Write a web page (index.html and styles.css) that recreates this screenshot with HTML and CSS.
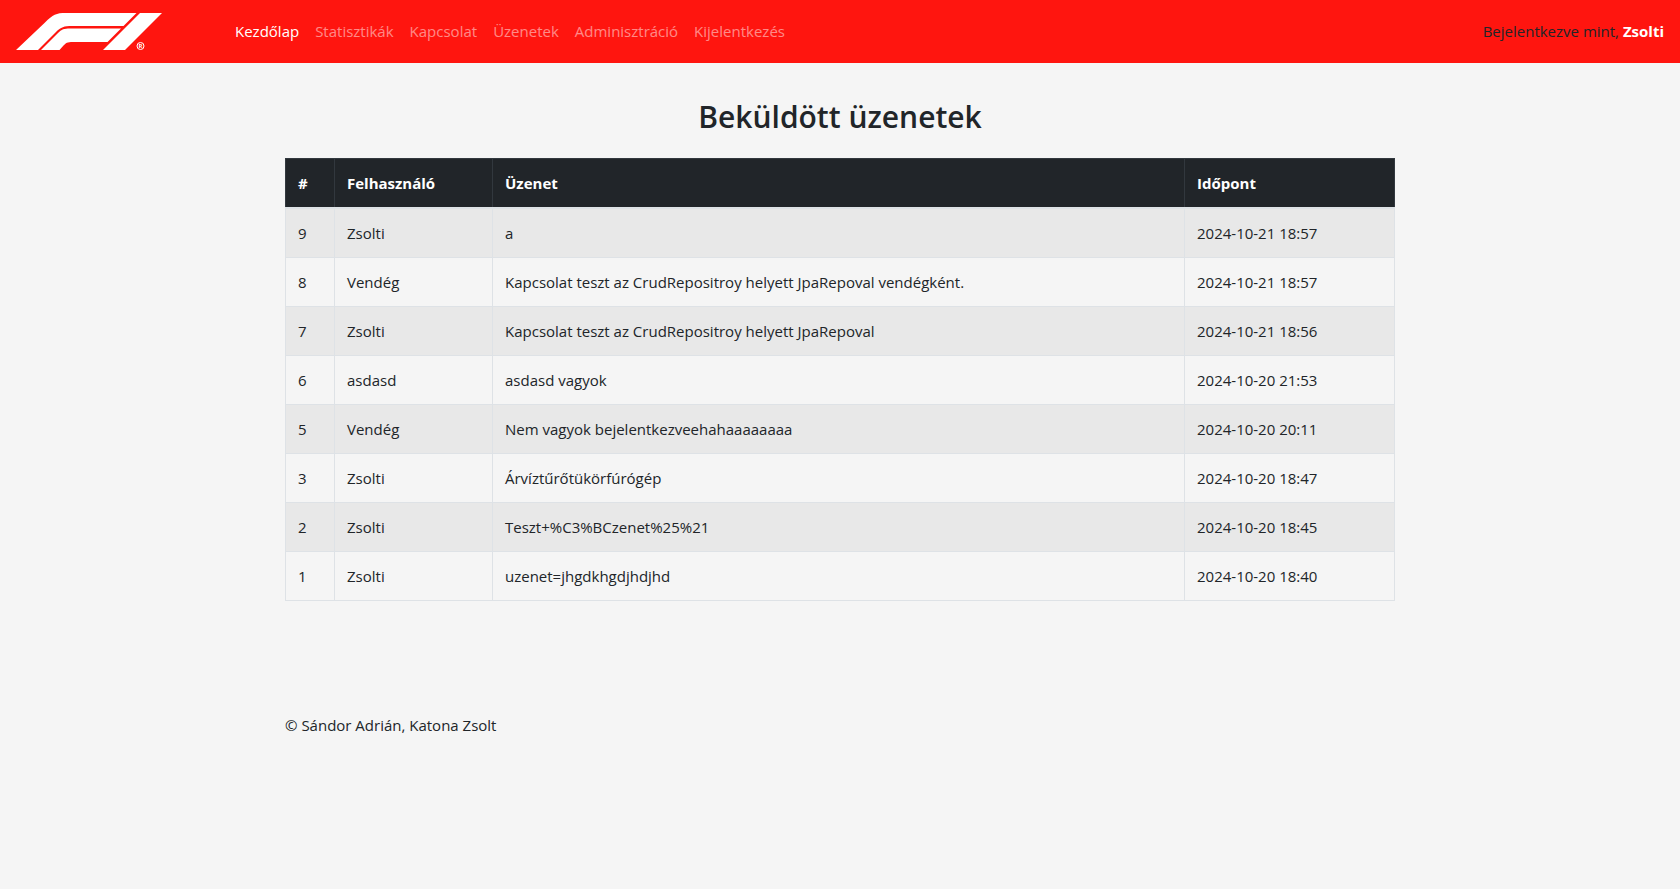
FILE: index.html
```html
<!DOCTYPE html>
<html lang="hu">
<head>
<meta charset="utf-8">
<meta name="viewport" content="width=device-width, initial-scale=1">
<title>Beküldött üzenetek</title>
<link rel="stylesheet" href="styles.css">
</head>
<body>
<header class="navbar">
  <a class="brand" href="#" aria-label="F1">
    <svg class="logo" viewBox="0 0 146 37" width="146" height="37" aria-hidden="true">
      <path d="M0 37 29 9.500C37 1.500 40 0 50 0H120.500L107.500 13H56C48 13 45 14 40 19L22 37Z"/>
      <path d="M25 37 41.500 20.500C46 16 48 15.500 54 15.500H105L91.500 29H57C51 29 50 30 47.500 32.500L43.500 37Z"/>
      <path d="M87 37 124 0H146L109 37Z"/>
      <circle class="mark-ring" cx="124.500" cy="33" r="3.500"/>
      <text class="mark-text" x="124.500" y="35" text-anchor="middle">R</text>
    </svg>
  </a>
  <nav class="menu">
    <a class="menu-link active" href="#">Kezdőlap</a>
    <a class="menu-link" href="#">Statisztikák</a>
    <a class="menu-link" href="#">Kapcsolat</a>
    <a class="menu-link" href="#">Üzenetek</a>
    <a class="menu-link" href="#">Adminisztráció</a>
    <a class="menu-link" href="#">Kijelentkezés</a>
  </nav>
  <div class="user">Bejelentkezve mint, <strong class="user-name">Zsolti</strong></div>
</header>
<main class="container">
  <h1 class="title">Beküldött üzenetek</h1>
  <table class="messages">
    <colgroup><col class="col-id"><col class="col-user"><col><col class="col-time"></colgroup>
    <thead>
      <tr><th scope="col">#</th><th scope="col">Felhasználó</th><th scope="col">Üzenet</th><th scope="col">Időpont</th></tr>
    </thead>
    <tbody>
      <tr><td>9</td><td>Zsolti</td><td>a</td><td>2024-10-21 18:57</td></tr>
      <tr><td>8</td><td>Vendég</td><td>Kapcsolat teszt az CrudRepositroy helyett JpaRepoval vendégként.</td><td>2024-10-21 18:57</td></tr>
      <tr><td>7</td><td>Zsolti</td><td>Kapcsolat teszt az CrudRepositroy helyett JpaRepoval</td><td>2024-10-21 18:56</td></tr>
      <tr><td>6</td><td>asdasd</td><td>asdasd vagyok</td><td>2024-10-20 21:53</td></tr>
      <tr><td>5</td><td>Vendég</td><td>Nem vagyok bejelentkezveehahaaaaaaaa</td><td>2024-10-20 20:11</td></tr>
      <tr><td>3</td><td>Zsolti</td><td>Árvíztűrőtükörfúrógép</td><td>2024-10-20 18:47</td></tr>
      <tr><td>2</td><td>Zsolti</td><td>Teszt+%C3%BCzenet%25%21</td><td>2024-10-20 18:45</td></tr>
      <tr><td>1</td><td>Zsolti</td><td>uzenet=jhgdkhgdjhdjhd</td><td>2024-10-20 18:40</td></tr>
    </tbody>
  </table>
</main>
<footer class="container footer">© Sándor Adrián, Katona Zsolt</footer>
</body>
</html>
```
FILE: styles.css
```css
*, *::before, *::after { box-sizing: border-box; }

body {
  margin: 0;
  background: #f5f5f5;
  color: #212529;
  font-family: "Segoe UI", "Open Sans", "Noto Sans", sans-serif;
  font-size: 15px;
  line-height: 24px;
}

.navbar {
  display: flex;
  align-items: center;
  padding: 13px 16px;
  background: #ff150f;
}

.brand { display: block; margin-right: 73px; }
.logo { display: block; fill: #fff; }
.mark-ring { fill: none; stroke: #fff; stroke-width: 1; }
.mark-text { font-size: 6px; font-weight: 700; }

.menu { display: flex; flex: 1; gap: 16px; }
.menu, .user { padding-bottom: 2px; }
.menu-link { color: rgba(255, 255, 255, 0.5); text-decoration: none; }
.menu-link.active { color: #fff; }
.user-name { color: #fff; font-weight: 700; }

.container {
  width: 100%;
  max-width: 1140px;
  margin: 0 auto;
  padding: 0 15px;
}

.title {
  margin: 0;
  padding: 34px 0 22px;
  font-size: 30px;
  font-weight: 600;
  line-height: 39px;
  text-align: center;
}

.messages {
  width: 100%;
  border-collapse: collapse;
  table-layout: fixed;
  border: 1px solid #dee2e6;
}

.col-id { width: 49px; }
.col-user { width: 158px; }
.col-time { width: 210px; }

.messages th,
.messages td {
  padding: 12px;
  border: 1px solid #dee2e6;
  text-align: left;
  vertical-align: top;
}

.messages th {
  background: #212529;
  border-color: #32383e;
  border-bottom: 2px solid #dee2e6;
  color: #fff;
  font-weight: 700;
}

.messages tbody tr:nth-child(odd) { background: #e8e8e8; }

.footer { padding-top: 112px; padding-bottom: 24px; }
```
